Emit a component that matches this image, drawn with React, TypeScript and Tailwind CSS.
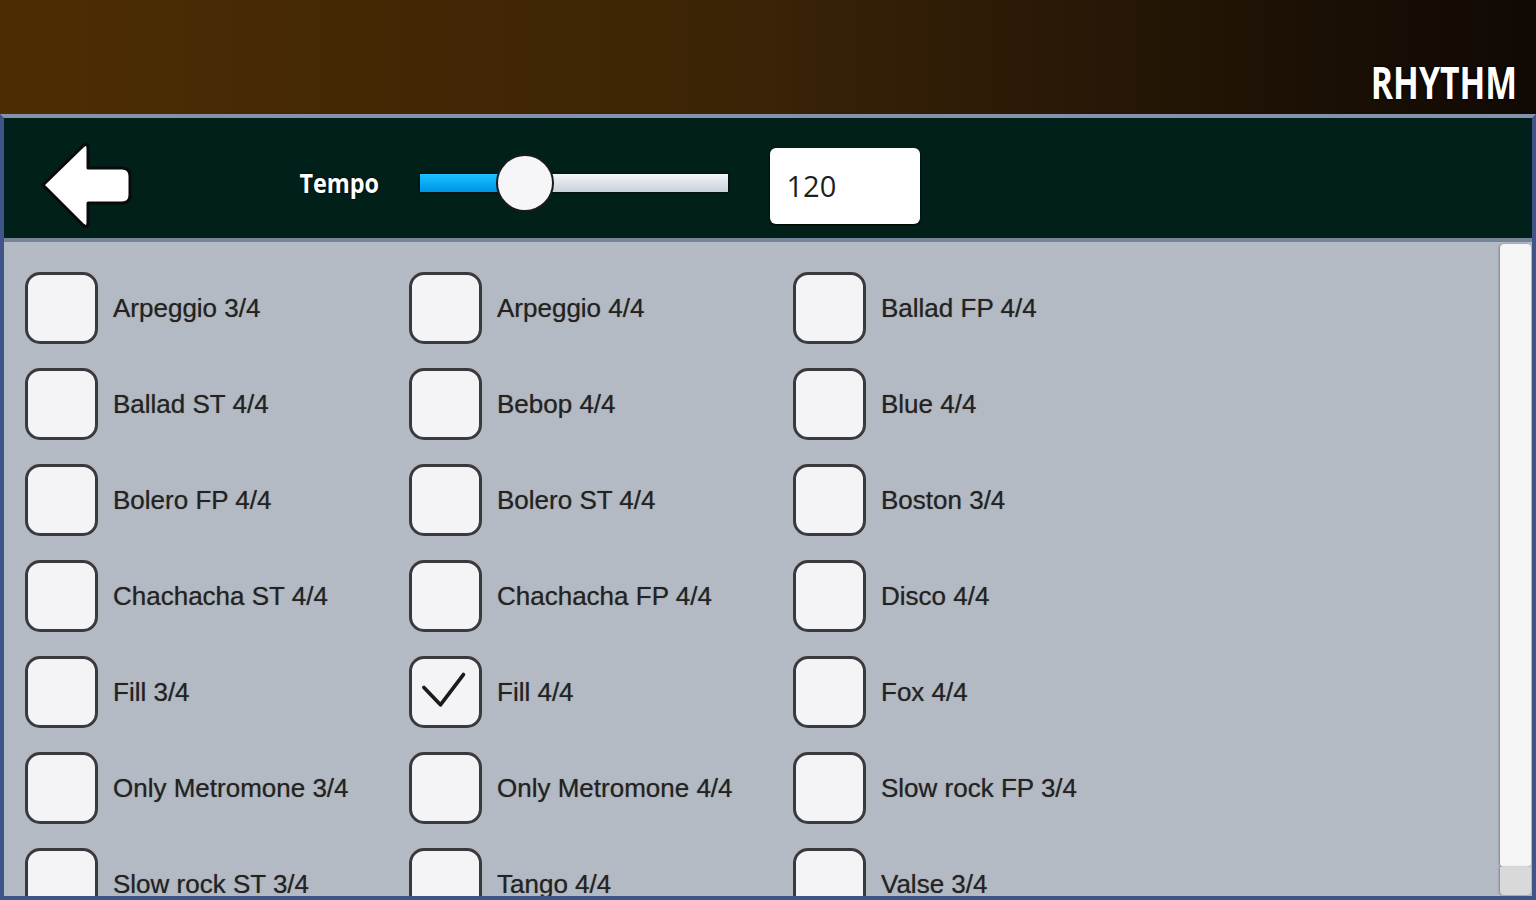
import React, { useState } from 'react';

const rhythms = [
  'Arpeggio 3/4', 'Arpeggio 4/4', 'Ballad FP 4/4',
  'Ballad ST 4/4', 'Bebop 4/4', 'Blue 4/4',
  'Bolero FP 4/4', 'Bolero ST 4/4', 'Boston 3/4',
  'Chachacha ST 4/4', 'Chachacha FP 4/4', 'Disco 4/4',
  'Fill 3/4', 'Fill 4/4', 'Fox 4/4',
  'Only Metromone 3/4', 'Only Metromone 4/4', 'Slow rock FP 3/4',
  'Slow rock ST 3/4', 'Tango 4/4', 'Valse 3/4',
];

function BackArrow() {
  return (
    <svg width="96" height="90" viewBox="0 0 96 90" className="shrink-0 mt-[6px]">
      <path
        d="M5 44 L45 5 Q50 1 50 8 L50 27 L84 27 Q92 27 92 35 L92 54 Q92 62 84 62 L50 62 L50 81 Q50 88 45 84 Z"
        fill="#ffffff"
        stroke="#0a0a0a"
        strokeWidth="3"
        strokeLinejoin="round"
      />
    </svg>
  );
}

function Checkbox({ checked }: { checked: boolean }) {
  return (
    <div className="w-[73px] h-[72px] shrink-0 rounded-[15px] border-[3px] border-[#3a3a3c] bg-[#f4f4f6] flex items-center justify-center">
      {checked && (
        <svg width="73" height="72" viewBox="0 0 73 72">
          <path d="M13 31 L31 50 L56 17" fill="none" stroke="#1c1c1c" strokeWidth="4" strokeLinecap="round" strokeLinejoin="round" />
        </svg>
      )}
    </div>
  );
}

export default function App() {
  const [selected, setSelected] = useState('Fill 4/4');
  const tempo = 120;

  return (
    <div className="w-[1536px] h-[900px] overflow-hidden flex flex-col bg-[#b4bac4]" style={{ fontFamily: '"Liberation Sans", Arial, sans-serif' }}>
      {/* header */}
      <div className="h-[114px] shrink-0 bg-linear-to-r from-[#4d2d03] via-[#3a2306] to-[#100904] flex items-end justify-end pr-[19px] pb-[10px]">
        <span
          className="text-white font-bold text-[45px] leading-none scale-x-75 origin-right [text-shadow:0_0_3px_#000,0_0_2px_#000]"
          style={{ fontFamily: '"Open Sans", sans-serif' }}
        >
          RHYTHM
        </span>
      </div>

      {/* panel */}
      <div className="flex-1 min-h-0 flex flex-col border-4 border-[#3d5588] border-t-[#8592ab]">
        {/* tempo bar */}
        <div className="h-[124px] shrink-0 bg-[#01201a] flex items-center pt-[10px] pl-[34px] border-b-4 border-[#76849a]">
          <BackArrow />
          <span
            className="ml-[161px] text-white font-bold text-[26px] leading-none scale-x-90 [text-shadow:0_0_2px_#000,0_0_1px_#000]"
            style={{ fontFamily: '"Open Sans", sans-serif' }}
          >
            Tempo
          </span>
          <div className="ml-[36px] relative w-[308px] h-[58px] shrink-0">
            <div className="absolute left-0 right-0 top-[20px] h-[18px] flex overflow-hidden shadow-[0_0_3px_#000]">
              <div className="w-[105px] bg-linear-to-b from-[#19c2ff] to-[#0094e6]" />
              <div className="flex-1 bg-linear-to-b from-[#f2f5f8] to-[#c9d1da]" />
            </div>
            <div className="absolute left-[76px] top-0 w-[58px] h-[58px] rounded-full bg-[#f6f6f8] border-2 border-[#1a1a1a]" />
          </div>
          <div className="ml-[42px] mt-[6px] w-[150px] h-[76px] bg-white rounded-[6px] flex items-center pl-[17px] shadow-[0_1px_2px_#000]">
            <span className="text-[29px] text-[#1e1e1e]" style={{ fontFamily: '"Open Sans", sans-serif' }}>{tempo}</span>
          </div>
        </div>

        {/* rhythm list */}
        <div className="flex-1 min-h-0 flex overflow-hidden">
          <div className="flex-1 pl-[21px] pt-[30px]">
            <div className="grid grid-cols-[384px_384px_384px] gap-y-[24px]">
              {rhythms.map((name) => (
                <div key={name} className="flex items-center h-[72px] cursor-pointer" onClick={() => setSelected(name)}>
                  <Checkbox checked={selected === name} />
                  <span className="ml-[15px] text-[26px] text-[#232323] whitespace-nowrap [text-shadow:0_0_1px_#666]">{name}</span>
                </div>
              ))}
            </div>
          </div>
          <div className="w-[31px] mr-[1px] pt-[2px] pb-[1px] flex flex-col shrink-0">
            <div className="flex-1 bg-[#f5f5f6] rounded-[4px] shadow-[-1px_0_2px_#7d8593]" />
            <div className="h-[28px] bg-[#d9d9da] rounded-b-[4px] shadow-[-1px_0_2px_#7d8593]" />
          </div>
        </div>
      </div>
    </div>
  );
}
